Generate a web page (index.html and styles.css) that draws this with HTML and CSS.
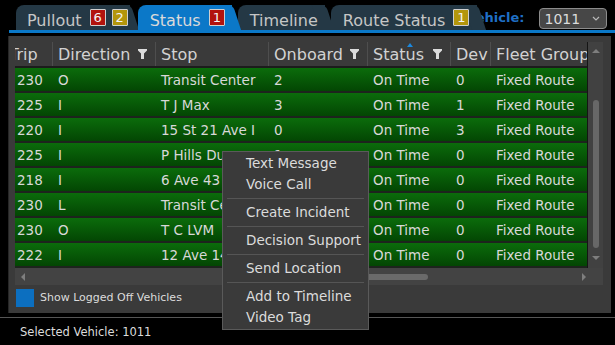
FILE: index.html
```html
<!DOCTYPE html>
<html lang="en">

<head>
    <meta charset="UTF-8">
    <title>Vehicle Status</title>
    <link rel="stylesheet" href="styles.css">
</head>

<body>

    <div class="topbar">
        <div class="tabs">
            <div class="tab tab-first">Pullout <span class="badge red">6</span><span class="badge gold">2</span></div>
            <div class="tab active">Status <span class="badge red">1</span></div>
            <div class="tab">Timeline</div>
            <div class="tab">Route Status <span class="badge gold">1</span></div>
        </div>
        <span class="vehicle-label">Vehicle:</span>
        <div class="vehicle-select">
            <span>1011</span>
            <svg width="8" height="5" viewBox="0 0 8 5"><path d="M1 1l3 3l3-3" fill="none" stroke="#b8b8b8" stroke-width="1.2"/></svg>
        </div>
    </div>

    <div class="panel">
        <div class="grid">
            <div class="grid-view">
                <div class="grid-header">
                    <div class="hcell hcell-first">Trip</div>
                    <div class="hcell">Direction <svg class="filter" width="9" height="10" viewBox="0 0 9 10"><path d="M0 0h9v1.5l-3 3v5.5h-3v-5.5l-3-3z" fill="#dcdcdc"/></svg></div>
                    <div class="hcell">Stop</div>
                    <div class="hcell">Onboard <svg class="filter" width="9" height="10" viewBox="0 0 9 10"><path d="M0 0h9v1.5l-3 3v5.5h-3v-5.5l-3-3z" fill="#dcdcdc"/></svg></div>
                    <div class="hcell sorted">Status <svg class="filter" width="9" height="10" viewBox="0 0 9 10"><path d="M0 0h9v1.5l-3 3v5.5h-3v-5.5l-3-3z" fill="#dcdcdc"/></svg></div>
                    <div class="hcell">Dev</div>
                    <div class="hcell">Fleet Group</div>
                </div>

                <div class="grid-row"><div>230</div><div>O</div><div>Transit Center</div><div>2</div><div>On Time</div><div>0</div><div>Fixed Route</div></div>
                <div class="grid-row"><div>225</div><div>I</div><div>T J Max</div><div>3</div><div>On Time</div><div>1</div><div>Fixed Route</div></div>
                <div class="grid-row"><div>220</div><div>I</div><div>15 St 21 Ave I</div><div>0</div><div>On Time</div><div>3</div><div>Fixed Route</div></div>
                <div class="grid-row"><div>225</div><div>I</div><div>P Hills Dunes</div><div>1</div><div>On Time</div><div>0</div><div>Fixed Route</div></div>
                <div class="grid-row"><div>218</div><div>I</div><div>6 Ave 43 St</div><div>0</div><div>On Time</div><div>0</div><div>Fixed Route</div></div>
                <div class="grid-row"><div>230</div><div>L</div><div>Transit Center</div><div>2</div><div>On Time</div><div>0</div><div>Fixed Route</div></div>
                <div class="grid-row"><div>230</div><div>O</div><div>T C LVM</div><div>1</div><div>On Time</div><div>0</div><div>Fixed Route</div></div>
                <div class="grid-row"><div>222</div><div>I</div><div>12 Ave 14 St</div><div>0</div><div>On Time</div><div>0</div><div>Fixed Route</div></div>
            </div>

            <div class="vscroll">
                <span class="arrow-up"></span>
                <span class="vthumb"></span>
                <span class="arrow-down"></span>
            </div>

            <div class="hscroll">
                <span class="arrow-left"></span>
                <span class="hthumb"></span>
                <span class="arrow-right"></span>
            </div>
        </div>

        <div class="options">
            <span class="checkbox"></span>
            <span>Show Logged Off Vehicles</span>
        </div>
    </div>

    <div class="statusbar">Selected Vehicle: 1011</div>

    <div class="context-menu">
        <div class="menu-item">Text Message</div>
        <div class="menu-item">Voice Call</div>
        <div class="menu-sep"></div>
        <div class="menu-item">Create Incident</div>
        <div class="menu-sep"></div>
        <div class="menu-item">Decision Support</div>
        <div class="menu-sep"></div>
        <div class="menu-item">Send Location</div>
        <div class="menu-sep"></div>
        <div class="menu-item">Add to Timeline</div>
        <div class="menu-item">Video Tag</div>
    </div>

</body>

</html>
```

FILE: styles.css
```css
body {
    font-family: 'DejaVu Sans', sans-serif;
    margin: 0;
    width: 615px;
    height: 345px;
    overflow: hidden;
    background-color: #000;
    color: #dcdcdc;
    position: relative;
}

/* top tabs */

.topbar {
    display: flex;
    align-items: flex-start;
    height: 25px;
    margin-left: 9px;
    padding: 5px 0 0 7px;
    border-bottom: 3px solid #0a78c8;
}

.tabs {
    display: flex;
    position: relative;
    z-index: 1;
}

.tab {
    position: relative;
    display: flex;
    align-items: flex-end;
    height: 25px;
    padding: 0 7px 0 12px;
    margin-right: 6px;
    background-color: #243845;
    color: #c6c6c6;
    font-size: 16px;
    white-space: pre;
    border-top-left-radius: 8px;
}

.tab::after {
    content: '';
    position: absolute;
    top: 0;
    bottom: 0;
    right: -5px;
    width: 14px;
    background: inherit;
    transform: skewX(18deg);
    border-top-right-radius: 5px;
    z-index: -1;
}

.tab-first {
    padding: 0 2px 0 11px;
    margin-right: 8px;
    z-index: 1;
}

.tab:nth-child(2) { z-index: 4; }
.tab:nth-child(3) { z-index: 2; }
.tab:nth-child(4) { z-index: 3; margin-right: 0; padding-right: 8px; }

.tab.active {
    background-color: #0b78c8;
    color: #dadada;
}

.badge {
    display: inline-flex;
    align-items: center;
    justify-content: center;
    width: 14px;
    height: 15px;
    margin: 0 0 4px 3px;
    border: 1px solid #cfcfcf;
    border-radius: 1px;
    color: #f4f4f4;
    font-size: 13px;
}

.badge + .badge {
    margin-left: 6px;
}

.badge.red {
    background-color: #b2130d;
}

.badge.gold {
    background-color: #b3960c;
}

.vehicle-label {
    position: relative;
    z-index: 0;
    align-self: center;
    margin-left: -11px;
    color: #1f6fc6;
    font-size: 13px;
    font-weight: bold;
}

.vehicle-select {
    display: flex;
    align-items: center;
    justify-content: space-between;
    box-sizing: border-box;
    width: 68px;
    height: 21px;
    margin: 3px 0 0 15px;
    padding: 0 6px 0 4px;
    background-color: #474747;
    border: 1px solid #8c8c8c;
    border-radius: 4px;
    color: #dcdcdc;
    font-size: 14px;
}

/* main panel */

.panel {
    box-sizing: border-box;
    height: 277px;
    margin: 3px 4px 0 8px;
    padding: 6px 8px 0 6px;
    background-color: #3a3a3a;
    border-left: 1px solid #262626;
}

.grid {
    display: grid;
    grid-template-columns: 573px 15px;
    grid-template-rows: 26px 200px 17px;
}

.grid-view {
    grid-row: 1 / 3;
    grid-column: 1;
    overflow: hidden;
    border-right: 1px solid #151515;
}

.grid-header,
.grid-row {
    display: grid;
    grid-template-columns: 41px 103px 113px 99px 83px 40px 120px;
    margin-left: -4px;
    width: max-content;
}

.grid-header {
    height: 24px;
    border-bottom: 2px solid #1c1c1c;
    font-size: 16px;
    color: #d2d2d2;
}

.hcell {
    position: relative;
    display: flex;
    align-items: center;
    justify-content: space-between;
    padding: 0 8px 0 5px;
    border-left: 1px solid #4e4e4e;
    white-space: nowrap;
    overflow: hidden;
}

.hcell-first {
    padding: 0;
    border-left: none;
    text-indent: -2px;
}

.sorted::before {
    content: '';
    position: absolute;
    top: 1px;
    left: 50%;
    margin-left: -2px;
    border-left: 3px solid transparent;
    border-right: 3px solid transparent;
    border-bottom: 4px solid #1b88de;
}

.grid-row {
    height: 23px;
    border-bottom: 2px solid #1d241d;
    background: linear-gradient(#0b6c0b, #034603);
    font-size: 13.5px;
    color: #d8d8d8;
}

.grid-row div {
    display: flex;
    align-items: center;
    padding-left: 6px;
    white-space: nowrap;
    overflow: hidden;
}

/* scrollbars */

.vscroll {
    grid-row: 1 / 3;
    grid-column: 2;
    display: flex;
    flex-direction: column;
    align-items: center;
    padding-top: 7px;
    background-color: #414141;
}

.arrow-up {
    border-left: 4px solid transparent;
    border-right: 4px solid transparent;
    border-bottom: 4px solid #7e7e7e;
}

.vthumb {
    width: 6px;
    height: 148px;
    margin-top: 47px;
    border-radius: 3px;
    background-color: #676767;
}

.arrow-down {
    margin-top: 8px;
    border-left: 4px solid transparent;
    border-right: 4px solid transparent;
    border-top: 4px solid #7e7e7e;
}

.hscroll {
    grid-row: 3;
    grid-column: 1 / 3;
    display: flex;
    align-items: center;
    padding: 0 17px 0 6px;
    background-color: #434343;
}

.arrow-left {
    border-top: 4px solid transparent;
    border-bottom: 4px solid transparent;
    border-right: 4px solid #7e7e7e;
}

.hthumb {
    width: 178px;
    height: 6px;
    margin-left: 225px;
    border-radius: 3px;
    background-color: #6a6a6a;
}

.arrow-right {
    margin-left: auto;
    border-top: 4px solid transparent;
    border-bottom: 4px solid transparent;
    border-left: 4px solid #7e7e7e;
}

.options {
    display: flex;
    align-items: center;
    gap: 6px;
    height: 25px;
    padding-left: 1px;
    font-size: 11px;
    color: #dcdcdc;
}

.checkbox {
    width: 18px;
    height: 18px;
    background-color: #0c6fc0;
}

/* status bar */

.statusbar {
    display: flex;
    align-items: center;
    height: 27px;
    margin-top: 4px;
    padding-left: 20px;
    border-top: 1px solid #565656;
    font-size: 11.5px;
    color: #dcdcdc;
}

/* right click menu */

.context-menu {
    position: absolute;
    left: 222px;
    top: 151px;
    width: 147px;
    box-sizing: border-box;
    padding: 1px 0;
    background-color: #3a3a3a;
    border: 1px solid #5a5a5a;
    font-size: 13.5px;
    color: #dcdcdc;
}

.menu-item {
    height: 21px;
    line-height: 21px;
    padding-left: 23px;
    white-space: nowrap;
}

.menu-sep {
    height: 1px;
    margin: 3px 4px;
    background-color: #555;
}
```
